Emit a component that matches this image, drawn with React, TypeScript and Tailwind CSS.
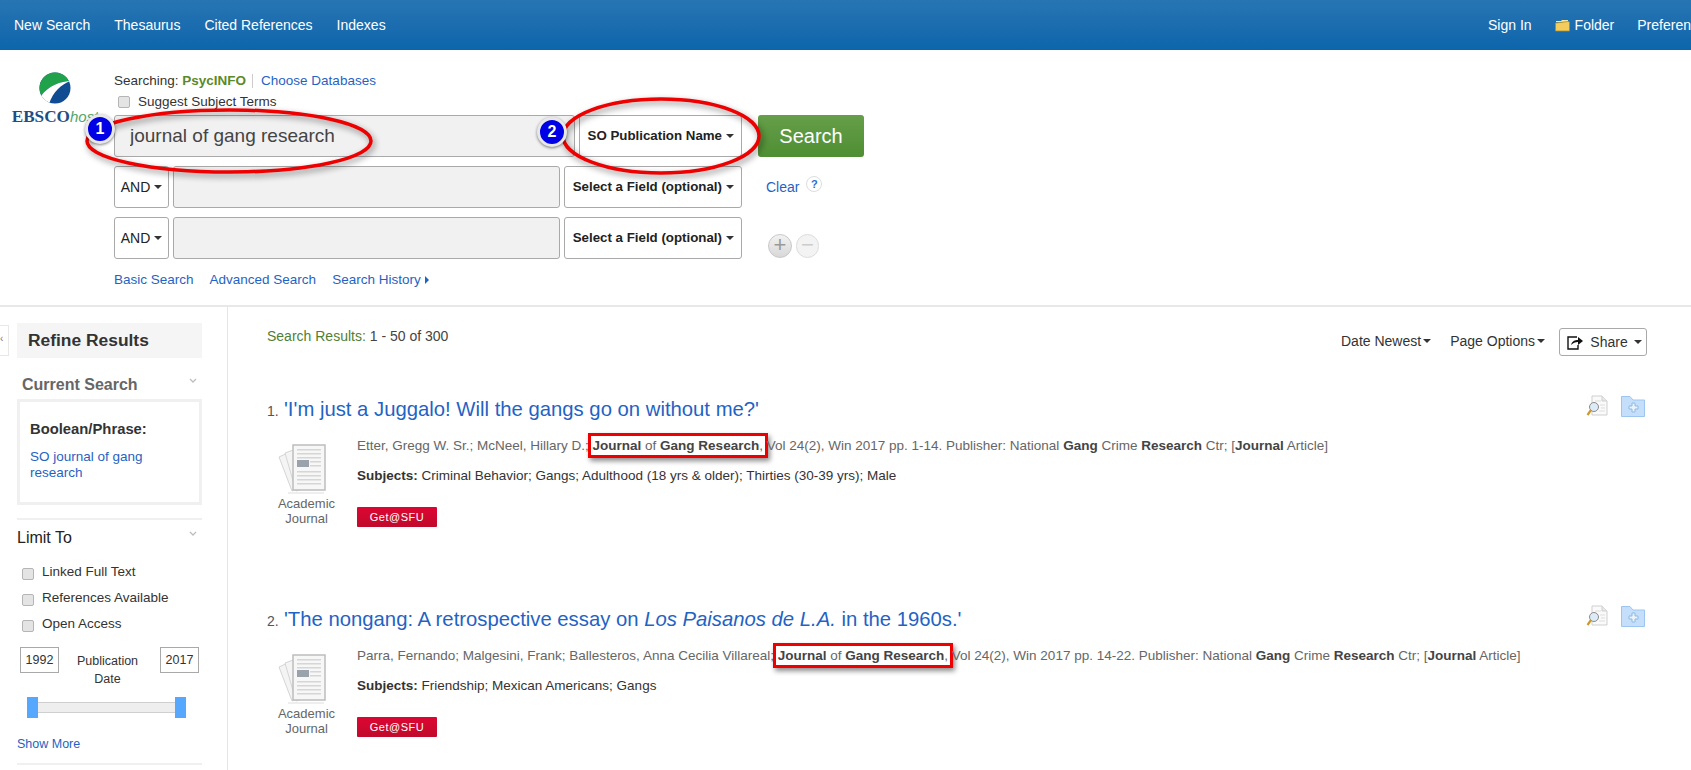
const font = "font-['Liberation_Sans',Arial,sans-serif]";
const link = "text-[#1f63c4]";

function Caret({ className = "border-t-[#333]" }: { className?: string }) {
  return <span className={`inline-block w-0 h-0 border-x-[4px] border-t-[4px] border-x-transparent ${className}`} />;
}

function Chevron() {
  return (
    <svg width="8" height="5" viewBox="0 0 8 5" className="shrink-0">
      <path d="M1 1L4 4L7 1" fill="none" stroke="#bdbdbd" strokeWidth="1.3" />
    </svg>
  );
}

function Logo() {
  return (
    <div className="flex flex-col items-center w-[96px] pl-[13px] pt-[22px]">
      <svg width="32" height="32" viewBox="0 0 32 32">
        <defs>
          <clipPath id="logo-disc"><circle cx="16" cy="16" r="15.5" /></clipPath>
        </defs>
        <g clipPath="url(#logo-disc)">
          <rect width="32" height="32" fill="#0f4c92" />
          <path d="M0 0H32V9C22 9 9 14 2 24L0 24Z" fill="#1fa24a" />
          <path d="M2 24C9 14 22 9 32 9C22 12 14 20 10 32L6 32Z" fill="#fff" />
        </g>
      </svg>
      <div className="mt-[3px] ml-[1px] leading-[20px] whitespace-nowrap">
        <span className="font-['Liberation_Serif',serif] font-bold text-[17.2px] text-[#1f4e86]">EBSCO</span>
        <span className={`${font} italic text-[15px] text-[#53a66c]`}>host</span>
      </div>
    </div>
  );
}

function AndButton() {
  return (
    <div className="w-[55px] h-[42px] border border-[#a9a9a9] rounded-[3px] flex items-center justify-center gap-[4px] text-[14px] text-[#222] shrink-0">
      AND <Caret />
    </div>
  );
}

function FieldSelect({ label, w }: { label: string; w: string }) {
  return (
    <div className={`${w} h-[42px] border border-[#a9a9a9] rounded-[3px] flex items-center justify-end gap-[4px] pr-[7px] font-bold text-[13.3px] text-[#222] shrink-0 whitespace-nowrap`}>
      {label} <Caret />
    </div>
  );
}

function EmptyInput() {
  return <div className="w-[387px] h-[42px] bg-[#f1f1f1] border border-[#a9a9a9] rounded-[3px] shrink-0" />;
}

function Check({ label }: { label: string }) {
  return (
    <label className="flex items-start gap-[9px] h-[26px] pl-[5px] text-[13.5px] text-[#333]">
      <input type="checkbox" className="appearance-none w-[12px] h-[12px] mt-[2px] bg-[#e4e4e4] border border-[#b5b5b5] rounded-[2px] shrink-0" />
      <span className="leading-[18px] -mt-[3px] -ml-[1px]">{label}</span>
    </label>
  );
}

function Sidebar() {
  return (
    <aside className="w-[228px] shrink-0 border-r border-[#e6e6e6] flex">
      <div className="w-[9px] h-[31px] mt-[18px] border border-l-0 border-[#e8e8e8] text-[10px] leading-[26px] text-[#777] shrink-0 overflow-hidden">‹</div>
      <div className="w-[185px] ml-[8px] pt-[16px]">
        <div className="h-[35px] bg-[#f5f5f5] flex items-center pl-[11px] font-bold text-[17.4px] text-[#333]">Refine Results</div>
        <div className="flex justify-between items-start pl-[5px] pr-[5px] h-[41px] pt-[17px]">
          <span className="font-bold text-[16px] leading-[20px] text-[#666]">Current Search</span>
          <span className="mt-[3px]"><Chevron /></span>
        </div>
        <div className="h-[106px] border-[3px] border-[#f0f0f0] pl-[10px] pt-[17px]">
          <div className="font-bold text-[14.8px] leading-[20px] text-[#333]">Boolean/Phrase:</div>
          <div className={`mt-[10px] text-[13.5px] leading-[16px] ${link}`}>SO journal of gang<br />research</div>
        </div>
        <div className="h-[2px] bg-[#f0f0f0] mt-[13px]" />
        <div className="flex justify-between items-start h-[46px] pt-[7px] pr-[5px]">
          <span className="text-[16px] leading-[22px] text-[#222]">Limit To</span>
          <span className="mt-[4px]"><Chevron /></span>
        </div>
        <Check label="Linked Full Text" />
        <Check label="References Available" />
        <Check label="Open Access" />
        <div className="flex justify-between pl-[3px] pr-[3px] mt-[3px] text-[12.5px] text-[#333]">
          <div className="w-[39px] h-[26px] border border-[#a9a9a9] flex items-center justify-center">1992</div>
          <div className="text-center leading-[18px] pt-[5px] -ml-[4px]">Publication<br />Date</div>
          <div className="w-[39px] h-[26px] border border-[#a9a9a9] flex items-center justify-center">2017</div>
        </div>
        <div className="relative h-[21px] mt-[9px] ml-[10px] mr-[16px] flex items-center">
          <div className="w-full h-[11px] bg-[#eeeeee] border border-[#cfcfcf]" />
          <div className="absolute left-0 top-0 w-[11px] h-[21px] bg-[#56a8ff]" />
          <div className="absolute right-0 top-0 w-[11px] h-[21px] bg-[#56a8ff]" />
        </div>
        <div className={`mt-[18px] text-[12.5px] leading-[16px] ${link}`}>Show More</div>
        <div className="h-[2px] bg-[#f0f0f0] mt-[11px]" />
      </div>
    </aside>
  );
}

function DocStack() {
  return (
    <svg width="48" height="52" viewBox="0 0 48 52" className="mr-[9px]">
      <g fill="#f4f4f4" stroke="#d5d5d5">
        <path d="M1 13L14 7L26 42L14 47Z" />
        <path d="M7 9L18 5L28 44L18 47Z" />
      </g>
      <rect x="15" y="1" width="32" height="45" fill="#f7f7f7" stroke="#bdbdbd" strokeWidth="1.5" />
      <g fill="#d6d6d6">
        <rect x="19" y="5" width="24" height="1.5" />
        <rect x="19" y="9" width="24" height="1.5" />
        <rect x="19" y="13" width="24" height="1.5" />
        <rect x="19" y="27" width="24" height="1.5" />
        <rect x="19" y="31" width="24" height="1.5" />
        <rect x="19" y="35" width="24" height="1.5" />
        <rect x="19" y="39" width="24" height="1.5" />
        <rect x="32" y="17" width="11" height="1.5" />
        <rect x="32" y="21" width="11" height="1.5" />
      </g>
      <rect x="19" y="16" width="12" height="7" fill="#9aa3ab" />
      <rect x="10" y="48" width="36" height="2" fill="#eeeeee" />
    </svg>
  );
}

function PreviewIcon() {
  return (
    <svg width="22" height="22" viewBox="0 0 22 22">
      <path d="M6 1H16L21 6V20H6Z" fill="#fafafa" stroke="#cfcfcf" />
      <path d="M16 1V6H21" fill="#e8e8e8" stroke="#cfcfcf" />
      <g stroke="#dddddd"><path d="M9 6H15M14 10H19M15 13H19M13 16H19" /></g>
      <circle cx="8" cy="12" r="4.5" fill="#dcebf7" stroke="#8a8a8a" />
      <path d="M5 15L1.5 20" stroke="#c99a32" strokeWidth="2.2" />
    </svg>
  );
}

function FolderAddIcon() {
  return (
    <svg width="24" height="21" viewBox="0 0 24 21">
      <path d="M.5 .5H9L12 4H23.5V20.5H.5Z" fill="#c5dffa" stroke="#9cc6f1" />
      <path d="M11 7H14V10H17V13H14V16H11V13H8V10H11Z" fill="#e8f3fd" stroke="#8fb9e3" />
    </svg>
  );
}

function Result(props: { n: number; title: React.ReactNode; authors: string; vol: string; subjects: string; box: string }) {
  return (
    <div className="h-[210px] relative">
      <div className="flex items-baseline pl-[22px] h-[30px]">
        <span className="text-[14px] text-[#555] w-[17px] shrink-0">{props.n}.</span>
        <span className={`text-[20.3px] leading-[30px] ${link}`}>{props.title}</span>
      </div>
      <div className="absolute right-[46px] top-[1px] flex gap-[13px] items-center">
        <PreviewIcon />
        <FolderAddIcon />
      </div>
      <div className="flex mt-[11px]">
        <div className="w-[112px] shrink-0 flex flex-col items-center pl-[11px] pt-[9px]">
          <DocStack />
          <div className="text-[13px] leading-[15px] text-[#666] text-center">Academic<br />Journal</div>
        </div>
        <div className="text-[13.5px] leading-[20px] pt-[1px]">
          <div className="text-[#666] whitespace-nowrap">
            {props.authors}{" "}
            <span className={props.box}>
              <b className="text-[#444]">Journal</b> of <b className="text-[#444]">Gang Research</b>,
            </span>{" "}
            {props.vol}. Publisher: National <b className="text-[#444]">Gang</b> Crime <b className="text-[#444]">Research</b> Ctr; [<b className="text-[#444]">Journal</b> Article]
          </div>
          <div className="mt-[10px] text-[#333]"><b>Subjects:</b> {props.subjects}</div>
          <div className="mt-[21px] w-[80px] h-[20px] rounded-[1px] bg-gradient-to-b from-[#dd0632] to-[#c00a2c] text-white text-[11px] flex items-center justify-center tracking-[0.5px]">Get@SFU</div>
        </div>
      </div>
    </div>
  );
}

export default function App() {
  const box = "shadow-[0_0_0_3px_#ee0000,2px_3px_5px_3px_rgba(0,0,0,0.45)] px-[2px] py-[2px] -mx-[2px]";
  return (
    <div className={`${font} relative w-[1691px] h-[770px] overflow-hidden bg-white`}>
      <nav className="h-[50px] bg-gradient-to-b from-[#2775b3] to-[#0c65ab] flex items-center justify-between text-white text-[14px] whitespace-nowrap">
        <div className="flex gap-[24px] pl-[14px]">
          <span>New Search</span>
          <span>Thesaurus</span>
          <span>Cited References</span>
          <span>Indexes</span>
        </div>
        <div className="flex gap-[23px] items-center w-[204px] shrink-0 mr-[-1px]">
          <span>Sign In</span>
          <span className="flex items-center gap-[5px]">
            <svg width="15" height="13" viewBox="0 0 15 13">
              <path d="M1 2H6L7 1H13V3H1Z" fill="#f7e7a4" />
              <path d="M.5 4L13 2.5L14.5 3V12H.5Z" fill="#f2cd5e" stroke="#a88a2a" strokeWidth=".8" />
            </svg>
            Folder
          </span>
          <span>Preferences</span>
        </div>
      </nav>

      <header className="h-[257px] flex border-b-[2px] border-[#e8e8e8]">
        <div className="w-[114px] shrink-0"><Logo /></div>
        <div className="pt-[22px]">
          <div className="text-[13.5px] leading-[18px] text-[#333] flex items-center">
            Searching:&nbsp;<b className="text-[#5a8a28]">PsycINFO</b>
            <span className="w-px h-[14px] bg-[#ccc] ml-[6px] mr-[8px]" />
            <span className={link}>Choose Databases</span>
          </div>
          <label className="flex items-center gap-[8px] pl-[4px] h-[18px] mt-[3px] text-[13.5px] text-[#333]">
            <input type="checkbox" className="appearance-none w-[12px] h-[12px] bg-[#e4e4e4] border border-[#b5b5b5] rounded-[2px]" />
            Suggest Subject Terms
          </label>
          <div className="flex flex-col gap-[9px] mt-[4px]">
            <div className="flex h-[42px]">
              <input readOnly defaultValue="journal of gang research" className="w-[461px] h-[42px] bg-[#f1f1f1] border border-[#a9a9a9] rounded-[3px] pl-[15px] text-[19px] text-[#444] outline-none" />
              <div className="w-[4px]" />
              <FieldSelect label="SO Publication Name" w="w-[163px]" />
              <div className="ml-[16px] w-[106px] h-[42px] rounded-[3px] bg-gradient-to-b from-[#659f49] to-[#4f8e33] text-white text-[20px] flex items-center justify-center">Search</div>
            </div>
            <div className="flex h-[42px] gap-[4px] items-start">
              <AndButton />
              <EmptyInput />
              <FieldSelect label="Select a Field (optional)" w="w-[178px]" />
              <div className={`ml-[20px] mt-[13px] text-[14px] leading-[16px] ${link}`}>Clear</div>
              <div className="ml-[3px] mt-[10px] w-[16px] h-[16px] rounded-full border border-[#ddd] text-[11px] leading-[14px] font-bold text-center text-[#2a6fd0]">?</div>
            </div>
            <div className="flex h-[42px] gap-[4px] items-start">
              <AndButton />
              <EmptyInput />
              <FieldSelect label="Select a Field (optional)" w="w-[178px]" />
              <div className="ml-[22px] mt-[17px] flex gap-[4px]">
                <div className="w-[24px] h-[24px] rounded-full border border-[#c8c8c8] bg-gradient-to-b from-[#f2f2f2] to-[#d8d8d8] text-[#999] text-[22px] leading-[20px] text-center">+</div>
                <div className="w-[23px] h-[24px] rounded-full border border-[#ddd] bg-[#f3f3f3] text-[#ccc] text-[22px] leading-[20px] text-center">−</div>
              </div>
            </div>
          </div>
          <div className={`flex gap-[16px] mt-[13px] text-[13.5px] leading-[16px] ${link}`}>
            <span>Basic Search</span>
            <span>Advanced Search</span>
            <span className="flex items-center gap-[4px]">Search History <span className="w-0 h-0 border-y-[4px] border-l-[4px] border-y-transparent border-l-[#1f63c4]" /></span>
          </div>
        </div>
      </header>

      <div className="flex h-[463px]">
        <Sidebar />
        <main className="flex-1 pl-[17px] relative">
          <div className="flex justify-between pt-[19px] pl-[22px] pr-[44px] h-[87px]">
            <div className="text-[14px] leading-[20px] text-[#4f7f35]">Search Results: <span className="text-[#444]">1 - 50 of 300</span></div>
            <div className="flex items-center h-[28px] mt-[2px] text-[14px] text-[#333]">
              <span className="flex items-center gap-[2px] -mt-[2px]">Date Newest <Caret /></span>
              <span className="flex items-center gap-[2px] ml-[19px] -mt-[2px]">Page Options <Caret /></span>
              <div className="ml-[14px] w-[88px] h-[28px] border border-[#a9a9a9] rounded-[3px] flex items-center justify-center gap-[6px] pl-[3px]">
                <svg width="17" height="15" viewBox="0 0 17 15">
                  <path d="M10 2H1V14H11V10" fill="none" stroke="#111" strokeWidth="1.4" />
                  <path d="M4 10C5 6 8 5 11 5V2L16 6L11 10V7C8 7 6 8 4 10Z" fill="#111" />
                </svg>
                Share <Caret />
              </div>
            </div>
          </div>
          <Result
            n={1}
            title="'I'm just a Juggalo! Will the gangs go on without me?'"
            authors="Etter, Gregg W. Sr.; McNeel, Hillary D.;"
            vol="Vol 24(2), Win 2017 pp. 1-14"
            subjects="Criminal Behavior; Gangs; Adulthood (18 yrs & older); Thirties (30-39 yrs); Male"
            box={box}
          />
          <Result
            n={2}
            title={<>'The nongang: A retrospective essay on <i>Los Paisanos de L.A.</i> in the 1960s.'</>}
            authors="Parra, Fernando; Malgesini, Frank; Ballesteros, Anna Cecilia Villareal;"
            vol="Vol 24(2), Win 2017 pp. 14-22"
            subjects="Friendship; Mexican Americans; Gangs"
            box={box}
          />
        </main>
      </div>

      {/* hand drawn annotations on top of the screenshot */}
      <svg className="absolute left-0 top-0 pointer-events-none drop-shadow-[2px_3px_3px_rgba(0,0,0,0.45)]" width="800" height="200" viewBox="0 0 800 200">
        <ellipse cx="229" cy="141" rx="142" ry="31" fill="none" stroke="#ee0000" strokeWidth="3.5" />
        <ellipse cx="661" cy="136" rx="98" ry="37" fill="none" stroke="#ee0000" strokeWidth="3.5" />
      </svg>
      <div className="absolute left-[85px] top-[114px] w-[30px] h-[30px] rounded-full bg-[#0000e6] border-[3px] border-[#e8e8e8] shadow-[0_1px_3px_rgba(0,0,0,0.5)] text-white font-bold text-[16px] leading-[24px] text-center">1</div>
      <div className="absolute left-[537px] top-[117px] w-[30px] h-[30px] rounded-full bg-[#0000e6] border-[3px] border-[#e8e8e8] shadow-[0_1px_3px_rgba(0,0,0,0.5)] text-white font-bold text-[16px] leading-[24px] text-center">2</div>
    </div>
  );
}
